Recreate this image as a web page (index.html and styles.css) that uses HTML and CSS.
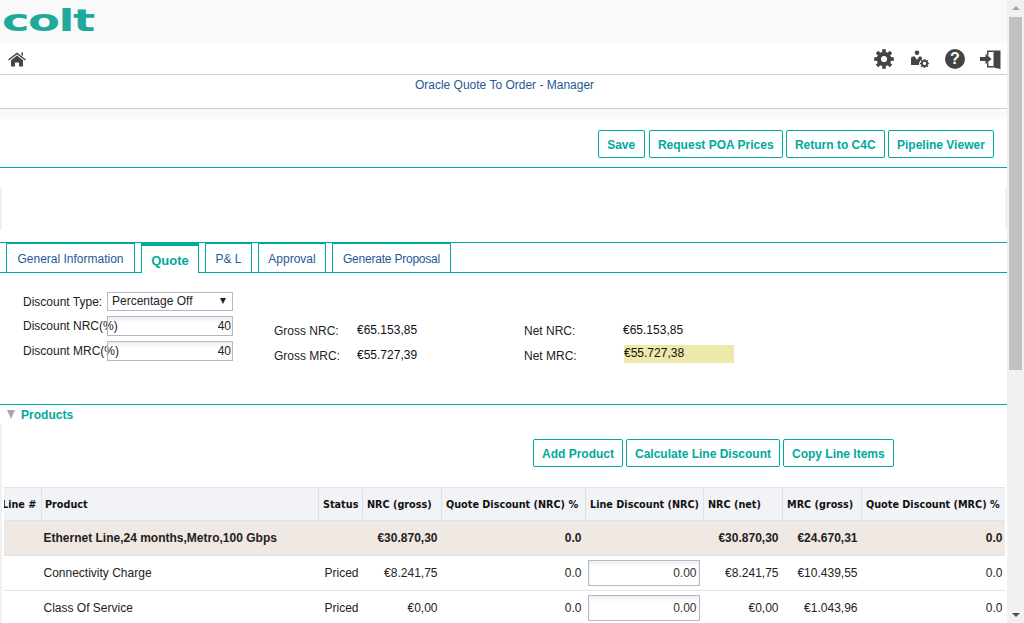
FILE: index.html
```html
<!DOCTYPE html>
<html lang="en">
<head>
  <meta charset="UTF-8">
  <meta name="viewport" content="width=device-width, initial-scale=1.0">
  <title>Oracle Quote To Order - Manager</title>
  <link rel="stylesheet" href="styles.css">
</head>
<body>

  <div class="page">
    <div class="logo-bar">
      <span class="logo">colt</span>
    </div>

    <div class="nav-bar">
      <svg class="icon-home" width="18" height="17" viewBox="0 0 18 17">
        <path d="M0.5 9 L9 2.5 L17.5 9" fill="none" stroke="#444" stroke-width="1.4"/>
        <path d="M13.5 2 L15 1 L15 5 L13.5 4 Z" fill="#444"/>
        <path d="M9 4.5 L15 9.2 V15.5 H11 V11.5 H7 V15.5 H3 V9.2 Z" fill="#444"/>
      </svg>
      <div class="nav-icons">
        <svg width="20" height="20" viewBox="0 0 20 20">
          <circle cx="10" cy="10" r="5.2" fill="none" stroke="#444" stroke-width="4.2"/>
          <g stroke="#444" stroke-width="3.6">
            <path d="M10 0.2 V4"/>
            <path d="M10 16 V19.8"/>
            <path d="M0.2 10 H4"/>
            <path d="M16 10 H19.8"/>
            <path d="M3 3 L5.8 5.8"/>
            <path d="M14.2 14.2 L17 17"/>
            <path d="M3 17 L5.8 14.2"/>
            <path d="M14.2 5.8 L17 3"/>
          </g>
        </svg>
        <svg width="20" height="20" viewBox="0 0 20 20">
          <circle cx="7" cy="3.8" r="2.3" fill="#444"/>
          <path d="M1 16 V9.5 Q1 7.5 3 7.5 H4.8 L7 11 L9.2 7.5 H10.5 Q12 7.5 12 9 V10.5 Q9 11.5 9 16 Z" fill="#444"/>
          <circle cx="14.5" cy="14.5" r="2.6" fill="none" stroke="#444" stroke-width="1.8"/>
          <g stroke="#444" stroke-width="1.5">
            <path d="M14.5 10 V12"/>
            <path d="M14.5 17 V19"/>
            <path d="M10 14.5 H12"/>
            <path d="M17 14.5 H19"/>
            <path d="M11.3 11.3 L12.7 12.7"/>
            <path d="M16.3 16.3 L17.7 17.7"/>
            <path d="M11.3 17.7 L12.7 16.3"/>
            <path d="M16.3 12.7 L17.7 11.3"/>
          </g>
        </svg>
        <span class="icon-help">?</span>
        <svg width="21" height="20" viewBox="0 0 21 20">
          <path d="M13.5 1.5 H20.5 V20 L13.5 18.5 Z" fill="#444"/>
          <path d="M7 1.5 H13.5 V3 H8.5 V6.5 H7 Z" fill="#444"/>
          <path d="M7 13.5 H8.5 V17 H13.5 V18.5 H7 Z" fill="#444"/>
          <path d="M0 8 H5.5 V4.8 L11.5 10 L5.5 15.2 V12 H0 Z" fill="#444"/>
        </svg>
      </div>
    </div>

    <div class="title-bar">Oracle Quote To Order - Manager</div>
    <div class="title-gap"></div>

    <div class="actions">
      <button class="btn">Save</button>
      <button class="btn">Request POA Prices</button>
      <button class="btn">Return to C4C</button>
      <button class="btn">Pipeline Viewer</button>
    </div>

    <div class="blank-panel">
      <div class="blank-inner"></div>
    </div>

    <div class="tabs">
      <a class="tab tab-general">General Information</a>
      <a class="tab tab-active">Quote</a>
      <a class="tab tab-pl">P&amp; L</a>
      <a class="tab tab-approval">Approval</a>
      <a class="tab tab-proposal">Generate Proposal</a>
    </div>

    <div class="quote-form">
      <label class="field-label">Discount Type:</label>
      <div class="select-wrap">
        <select class="field-select">
          <option>Percentage Off</option>
        </select>
      </div>

      <label class="field-label">Discount NRC(%)</label>
      <input class="field-input" type="text" value="40">
      <span></span>
      <span class="total-label">Gross NRC:</span>
      <span class="total-value">€65.153,85</span>
      <span class="total-label">Net NRC:</span>
      <span class="total-value">€65.153,85</span>

      <label class="field-label">Discount MRC(%)</label>
      <input class="field-input" type="text" value="40">
      <span></span>
      <span class="total-label">Gross MRC:</span>
      <span class="total-value">€55.727,39</span>
      <span class="total-label">Net MRC:</span>
      <span class="total-value highlight">€55.727,38</span>
    </div>

    <div class="section-head">
      <span class="arrow-down"></span>
      <span class="section-title">Products</span>
    </div>

    <div class="section-body">
      <div class="section-actions">
        <button class="btn">Add Product</button>
        <button class="btn">Calculate Line Discount</button>
        <button class="btn">Copy Line Items</button>
      </div>

      <div class="table-wrap">
        <table class="products">
          <colgroup>
            <col class="col-line">
            <col class="col-product">
            <col class="col-status">
            <col class="col-nrc">
            <col class="col-qd">
            <col class="col-ld">
            <col class="col-net">
            <col class="col-mrc">
            <col class="col-qdm">
          </colgroup>
          <thead>
            <tr>
              <th class="line-head">Line #</th>
              <th class="product-head">Product</th>
              <th>Status</th>
              <th>NRC (gross)</th>
              <th>Quote Discount (NRC) %</th>
              <th>Line Discount (NRC)</th>
              <th>NRC (net)</th>
              <th>MRC (gross)</th>
              <th>Quote Discount (MRC) %</th>
            </tr>
          </thead>
          <tbody>
            <tr class="group-row">
              <td></td>
              <td>Ethernet Line,24 months,Metro,100 Gbps</td>
              <td></td>
              <td class="num">€30.870,30</td>
              <td class="num">0.0</td>
              <td></td>
              <td class="num">€30.870,30</td>
              <td class="num">€24.670,31</td>
              <td class="num">0.0</td>
            </tr>
            <tr>
              <td></td>
              <td>Connectivity Charge</td>
              <td class="status">Priced</td>
              <td class="num">€8.241,75</td>
              <td class="num">0.0</td>
              <td class="cell-input"><input class="line-input" type="text" value="0.00"></td>
              <td class="num">€8.241,75</td>
              <td class="num">€10.439,55</td>
              <td class="num">0.0</td>
            </tr>
            <tr>
              <td></td>
              <td>Class Of Service</td>
              <td class="status">Priced</td>
              <td class="num">€0,00</td>
              <td class="num">0.0</td>
              <td class="cell-input"><input class="line-input" type="text" value="0.00"></td>
              <td class="num">€0,00</td>
              <td class="num">€1.043,96</td>
              <td class="num">0.0</td>
            </tr>
          </tbody>
        </table>
      </div>
    </div>
  </div>

  <div class="scrollbar">
    <span class="scroll-up"></span>
    <div class="scroll-track"><div class="scroll-thumb"></div></div>
    <span class="scroll-down"></span>
  </div>

</body>
</html>
```

FILE: styles.css
```css
* {
  margin: 0;
  padding: 0;
  box-sizing: border-box;
}

html, body {
  height: 623px;
  overflow: hidden;
}

body {
  display: flex;
  font-family: 'Liberation Sans', Arial, sans-serif;
  font-size: 12px;
  color: #222;
  background: #fff;
}

.page {
  width: 1007px;
  height: 623px;
  overflow: hidden;
  flex: none;
}

/* header */
.logo-bar {
  height: 43px;
  background: #f9f9f9;
  overflow: hidden;
}

.logo {
  display: block;
  width: 60px;
  margin-left: 2px;
  font-family: 'DejaVu Sans', sans-serif;
  font-weight: bold;
  font-size: 31px;
  line-height: 40px;
  letter-spacing: -1px;
  color: #1fa99c;
  transform: scaleX(1.5);
  transform-origin: left center;
}

.nav-bar {
  display: flex;
  justify-content: space-between;
  align-items: flex-start;
  height: 32px;
  padding: 7px 6px 0 8px;
  border-bottom: 1px solid #c3d1df;
}

.icon-home {
  margin-top: 1px;
}

.nav-icons {
  display: flex;
  gap: 15px;
  margin-top: -1px;
}

.nav-icons svg:first-child {
  margin-right: 1px;
  margin-left: -1px;
}

.icon-help {
  width: 20px;
  height: 20px;
  border-radius: 50%;
  background: #444;
  color: #fff;
  font-weight: bold;
  font-size: 16px;
  line-height: 20px;
  text-align: center;
}

.title-bar {
  height: 34px;
  padding: 3px 0 0 2px;
  line-height: 14px;
  text-align: center;
  color: #1f5a96;
  border-bottom: 1px solid #c3d1df;
}

.title-gap {
  height: 10px;
  background: #f9f9f9;
}

/* buttons */
.actions {
  display: flex;
  justify-content: flex-end;
  gap: 3px;
  height: 49px;
  padding: 11px 13px 0 0;
  border-bottom: 1px solid #00a99d;
}

.btn {
  height: 28px;
  padding: 1px 8.2px 0;
  border: 1px solid #00a99d;
  border-radius: 2px;
  background: #fff;
  color: #00a99d;
  font-family: inherit;
  font-weight: bold;
  font-size: 12px;
}

.actions .btn:first-child {
  margin-right: 1px;
  padding: 1px 8.6px 0;
}

.blank-panel {
  height: 74px;
  padding-top: 19px;
}

.blank-inner {
  height: 43px;
  border-left: 2px solid #f0f0f0;
  border-right: 2px solid #f0f0f0;
}

/* tabs */
.tabs {
  display: flex;
  gap: 6px;
  height: 31px;
  padding-left: 6px;
  border-top: 1px solid #00a99d;
  border-bottom: 1px solid #00a99d;
}

.tab {
  height: 29px;
  border: 1px solid #00a99d;
  border-bottom: none;
  line-height: 31px;
  text-align: center;
  color: #1f5a96;
}

.tab-general { width: 129px; }
.tab-pl { width: 47px; }
.tab-approval { width: 68px; }
.tab-proposal {
  width: 119px;
  letter-spacing: -0.22px;
}

.tab-active {
  width: 58px;
  height: 30px;
  border-top: 3px solid #00a99d;
  background: #fff;
  color: #00a99d;
  font-weight: bold;
  font-size: 13px;
  line-height: 30px;
}

/* discount form */
.quote-form {
  display: grid;
  grid-template-columns: 84px 126px 41px 83px 167px 99px 111px;
  grid-template-rows: 19px 20px 20px;
  row-gap: 5px;
  align-items: center;
  height: 132px;
  align-content: start;
  padding: 19px 0 0 23px;
  border-bottom: 1px solid #00a99d;
}

.field-label {
  white-space: nowrap;
}

.select-wrap {
  position: relative;
  grid-column: 2 / -1;
  width: 126px;
  height: 19px;
}

.select-wrap::after {
  content: "";
  position: absolute;
  right: 7px;
  top: 6px;
  border-left: 3.5px solid transparent;
  border-right: 3.5px solid transparent;
  border-top: 6px solid #222;
}

.field-select {
  appearance: none;
  display: block;
  width: 100%;
  height: 19px;
  padding: 0 0 2px 4px;
  border: 1px solid #b4b7cb;
  border-radius: 0;
  background: #fff;
  font-family: inherit;
  font-size: 12px;
  color: #222;
}

.field-input {
  position: relative;
  width: 126px;
  height: 20px;
  padding-right: 1px;
  border: 1px solid #b4b7cb;
  background: transparent;
  box-shadow: inset 0 3px 4px rgba(0, 0, 0, 0.07);
  font-family: inherit;
  font-size: 12px;
  color: #222;
  text-align: right;
}

.total-label {
  margin-top: 10px;
}

.total-value {
  margin-top: 8px;
  color: #111;
}

.highlight {
  height: 18px;
  margin: 6px 0 0 1px;
  line-height: 17px;
  background: #eee8aa;
}

/* products */
.section-head {
  display: flex;
  align-items: center;
  gap: 6px;
  height: 19px;
  padding-left: 7px;
}

.arrow-down {
  border-left: 4.5px solid transparent;
  border-right: 4.5px solid transparent;
  border-top: 9px solid #aaa;
}

.section-title {
  color: #00a99d;
  font-weight: bold;
  letter-spacing: 0.03px;
}

.section-body {
  height: 199px;
  border-left: 2px solid #f1f1f1;
  overflow: hidden;
}

.section-actions {
  display: flex;
  gap: 3px;
  height: 63px;
  padding: 15px 0 0 531px;
}

.section-actions .btn {
  padding: 1px 8px 0;
}

.table-wrap {
  width: 1001px;
  margin-left: 2px;
  overflow: hidden;
}

.products {
  width: 1005px;
  margin-left: -3px;
  table-layout: fixed;
  border-collapse: collapse;
}

.col-line { width: 40px; }
.col-product { width: 277px; }
.col-status { width: 44px; }
.col-nrc { width: 79px; }
.col-qd { width: 144px; }
.col-ld { width: 118px; }
.col-net { width: 79px; }
.col-mrc { width: 79px; }
.col-qdm { width: 145px; }

.products th {
  height: 33px;
  padding: 0 4px;
  background: #f1f3f7;
  border: 1px solid #dde3ea;
  font-family: 'DejaVu Sans Condensed', 'DejaVu Sans', sans-serif;
  font-stretch: condensed;
  font-size: 10.75px;
  text-align: left;
  color: #111;
  white-space: nowrap;
}

.products .line-head {
  padding: 0;
}

.products .product-head {
  padding-left: 3px;
}

.products td {
  height: 35px;
  padding: 0 4px 0 2px;
  border-bottom: 1px solid #dfe3e8;
  white-space: nowrap;
}

.products .num {
  text-align: right;
}

.products .status {
  padding-left: 6px;
}

.group-row td {
  background: #f0e8e2;
  font-weight: bold;
}

.products td.cell-input {
  padding: 0 3px 0 2px;
}

.line-input {
  display: block;
  width: 112px;
  height: 26px;
  padding-right: 2px;
  border: 1px solid #b4b7cb;
  box-shadow: inset 0 3px 4px rgba(0, 0, 0, 0.07);
  font-family: inherit;
  font-size: 12px;
  color: #333;
  text-align: right;
}

/* scrollbar */
.scrollbar {
  display: flex;
  flex-direction: column;
  align-items: center;
  width: 17px;
  height: 623px;
  background: #f1f1f1;
}

.scroll-up, .scroll-down {
  flex: none;
  width: 0;
  height: 0;
  border-left: 4px solid transparent;
  border-right: 4px solid transparent;
}

.scroll-up {
  margin: 6px 0 7px;
  border-bottom: 4px solid #a3a3a3;
}

.scroll-down {
  margin: 7px 0 6px;
  border-top: 4px solid #505050;
}

.scroll-track {
  flex: 1;
  width: 13px;
}

.scroll-thumb {
  height: 353px;
  background: #c1c1c1;
}
```
